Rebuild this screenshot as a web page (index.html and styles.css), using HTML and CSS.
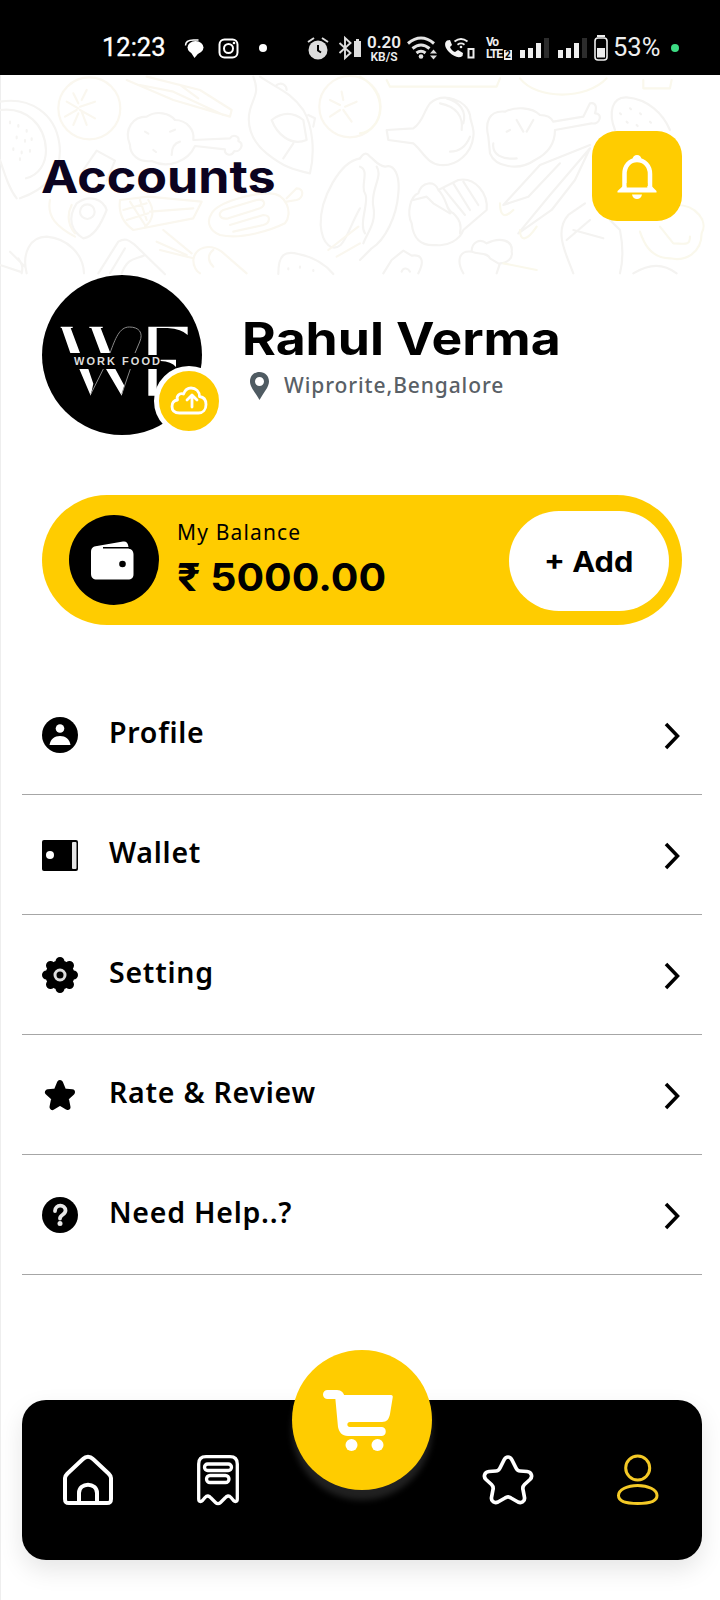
FILE: index.html
```html
<!DOCTYPE html>
<html lang="en">
<head>
<meta charset="utf-8">
<title>Accounts</title>
<link rel="stylesheet" href="styles.css">
</head>
<body>
<div class="screen">
  <div class="status">
    <span class="time"><span class="fit">12:23</span></span>
    <svg class="notifs" width="86" height="26" viewBox="183 35 86 26">
      <ellipse cx="195.500" cy="47.500" rx="8" ry="6.500" fill="#fff"/>
      <path d="M190 51l4.500 7 5-6z" fill="#fff"/>
      <path d="M185.500 45.500c0-4 4-5.500 8-5.500h5" fill="none" stroke="#fff" stroke-width="1.500"/>
      <rect x="219.500" y="39.500" width="18" height="18" rx="5" fill="none" stroke="#fff" stroke-width="2"/>
      <circle cx="228.500" cy="48.500" r="4.500" fill="none" stroke="#fff" stroke-width="2"/>
      <circle cx="234" cy="43" r="1.300" fill="#fff"/>
      <circle cx="263" cy="48" r="4" fill="#fff"/>
    </svg>
    <svg class="radios" width="56" height="26" viewBox="306 35 56 26">
      <circle cx="318" cy="50" r="9.500" fill="#ddd"/>
      <path d="M308 42l6-4M328 42l-6-4" stroke="#ddd" stroke-width="2"/>
      <path d="M318 45v5.500l3 2" fill="none" stroke="#000" stroke-width="2"/>
      <path d="M339.500 43l11 10-5.500 5V38l5.500 5-11 10" fill="none" stroke="#ddd" stroke-width="1.900"/>
      <path d="M354 41h7v16h-7zM356 39h3v2h-3z" fill="#ddd"/>
    </svg>
    <span class="rate"><b>0.20</b><i>KB/S</i></span>
    <svg class="wifi" width="68" height="26" viewBox="407 35 68 26">
      <g fill="none" stroke="#e4e4e4" stroke-width="3">
        <path d="M408 43.500q13-11 26 0M412.500 48.500q8.500-7 17 0M416.500 53q4.500-3.500 9 0"/>
      </g>
      <circle cx="421" cy="56.500" r="2.300" fill="#e4e4e4"/>
      <path d="M430 53.500l3.500-4 3.500 4zM430 55.500l3.500 4 3.500-4z" fill="#ddd"/>
      <path d="M447 40.500c-3 2-2.500 7 2 11.500 5 5 10 6.500 13.500 4l.5-3-5-3-3 2c-2.500-1-4-2.500-5-5l2-2-2-5z" fill="#f4f4f4"/>
      <g fill="none" stroke="#eee" stroke-width="1.800"><path d="M454.500 41.500q6.500-5 13 0M457.500 44.700q3.500-2.500 7 0"/></g>
      <circle cx="461" cy="47" r="1.300" fill="#eee"/>
      <path d="M468.500 49h5v8.500h-5z" fill="none" stroke="#eee" stroke-width="2"/>
    </svg>
    <span class="volte"><span>Vo</span><span>LTE<em>2</em></span></span>
    <svg class="signals" width="90" height="28" viewBox="519 34 90 28">
      <g fill="#eee"><path d="M520 50h5v8h-5zM528 48h5v10h-5zM536 43h5v15h-5zM558 50h5v8h-5zM566 48h5v10h-5zM574 43h5v15h-5z"/></g>
      <path d="M544 38h5v20h-5zM582 38h5v20h-5z" fill="#2c2c2c"/>
      <rect x="595" y="38" width="12" height="22" rx="3" fill="none" stroke="#eee" stroke-width="1.600"/>
      <path d="M597 35h8v2h-8zM597 48h8v9.500h-8z" fill="#eee"/>
    </svg>
    <span class="charge"><span class="fit">53%</span></span>
    <span class="live"></span>
  </div>

  <div class="hero">
    <svg class="doodles" viewBox="0 75 720 200" width="720" height="200" fill="none" stroke-width="6.500" stroke-linecap="round" stroke-linejoin="round">
      <g transform="translate(0 70) scale(.3333)">
        <g stroke="#f5f4f2">
          <path d="M0 95C90 80 165 130 178 220S130 360 60 385M0 120c80-10 135 45 138 120 0 40-20 75-60 85M0 270c20 60 30 90 50 115"/>
          <path d="M30 155v5M55 165v5M80 180v5M50 200v5M75 210v5M95 205v5M40 235v5M65 245v5M90 240v5M60 265v5"/>
          <path d="M390 225c-20-50 10-85 50-85 30-20 70-10 85 10 35 0 60 30 55 60l110-5c10-15 30-5 25 8 20 10 5 35-12 30-10 20-30 10-28-5l-90-10c-20 45-80 70-130 45-40 5-65-20-65-48z"/>
          <path d="M435 185l10 6M510 185l15-6M540 215c-20 5-25 20-25 40M460 240l8 6"/>
          <path d="M250 300l40-58 55 30-25 60M230 400c40-30 80-10 90 20-20 50-40 80-70 85-35-20-50-60-20-105z"/>
          <circle cx="262" cy="425" r="22"/>
          <path d="M80 610c-15-60 10-110 60-110 60 5 110 50 112 110M30 545l45 45M0 585l60 20M65 610c5-20 0-30-10-45"/>
          <path d="M295 610l60-95c25-15 35 0 50 10l90 88M330 610l45-75M365 610c20-50 40-40 70-55"/>
          <path d="M835 612c0-60 20-70 60-60 50 10 80 30 105 60M865 595v3M900 590v3M940 600v3"/>
          <path d="M1080 265c-60 10-120 120-118 200 5 60 35 80 60 60 20-20 30-60 58-110"/>
          <path d="M760 20c20 50 0 60-10 100s0 90 50 130 80 50 130 60c15-60 10-140-20-190-40-55-70-60-130-100M815 150c40-30 70-20 95 0l10 60c-50 20-90-20-105-60zM850 265l30-45M830 45c15-10 30 0 30 15M925 135l20 10-5 25"/>
        </g>
        <g stroke="#faf7ef">
          <circle cx="268" cy="115" r="93"/><circle cx="1050" cy="110" r="92"/>
          <path d="M235 115l-35-20M235 100l-15-30M245 90l15-30M240 110l45-15M240 120l45 25M235 130l-15 35M245 125l15 40M230 120l-35 20"/>
          <path d="M1020 105l-30-15M1030 90l-5-25M1035 110l35-15M1030 120l25 35M1020 120l-30 20"/>
          <path d="M380 30l140 60 170 50 5-20-95-60-160-40M420 45l100 20 150 70M540 45l55 40"/>
          <path d="M360 390l85-10 160 15-25 50-180 35c-30-20-45-50-40-90zM390 395l45 70M420 390l20 60M450 425l130-10M445 390c20 30 15 60-10 80M370 420l70-20M380 450l65-20"/>
          <path d="M635 430c20-35 120-60 175-60 50 0 70 60 45 90-40 20-130 50-195 35-25-10-45-35-25-65zM670 420l100-30c25-5 30 15 10 25l-95 30c-25 5-35-15-15-25zM690 465l100-30c25 0 20 25 0 30l-90 20M860 385l30-30c25 0 20 30 0 35l-30 5"/>
          <path d="M470 515l90 40M490 480l85 70M480 540l100 25M580 570c5-40 50-50 85-25l75 65M580 570c0 20 10 35 20 40M640 540c-20 15-15 35 0 50"/>
          <path d="M150 390c-10 50 20 80 75 110M215 405c-15 30-10 60 10 85M985 540l90-70M1010 560l70-40"/>
        </g>
      </g>
      <g transform="translate(360 70) scale(.3333)">
        <g stroke="#f4f3f1">
          <path d="M80 180l80-5c30-20 30-50 50-75 40-35 110-10 120 35 0 20 15 40 10 65-5 50-50 90-100 85-40-5-50-40-80-65l-75-10zM240 100c50 10 70 40 65 80M260 85c40 10 60 40 50 75M270 245c30 0 50-20 60-45"/>
          <path d="M385 200c-10-40 0-80 50-75 30-15 80-15 105 10 25 0 35 10 40 20l90-15 20-40c20-5 20 15 15 30 25 0 15 35-10 30l-110 20c0 40-20 70-60 90-50 35-120 20-135-20zM440 185l10-5M470 150l20 35M520 150l-20 35M400 220c-5 35 30 50 70 45"/>
          <path d="M765 180c-20-50-10-100 35-98 65 5 110 50 130 98M780 130l3 3M810 115l3 3M840 130l3 3M800 155l3 3M870 155l3 3M830 165l3 3"/>
          <path d="M155 460c-15-30-5-80 20-90 10-35 50-40 60-10l60-30c50-10 90 40 85 90l-70 60c-10 30-50 50-80 45-50 5-70-20-75-65zM235 360c30 30 20 60 45 70 20 20 25 35 20 60M250 355l65 80M280 340l50 80M310 335l45 70M160 390l40-10 20 20 50 30"/>
          <path d="M0 265c10-15 20-20 30-5 15 10 20 25 45 30 30-10 45 30 40 80-5 70-40 140-80 165l-35 35M0 290c30 10 0 60 15 80s-20 90 0 120M50 290c20 30-20 70-10 120s-20 80-30 110"/>
          <path d="M70 610l25-40 35-28 25 15c30-5 40 15 20 53M125 605c5-15 20-10 25 0M310 610c-20-35-15-70 25-65 0-30 25-40 45-25 40-20 80-10 75 25 5 20-15 35-35 35l-10 30M335 545c20 10 45 0 55 20l25 15"/>
          <path d="M690 225l-150 60-110 120 75-25 95-100M690 235l-120 140-95 115 100-70 70-90z"/>
          <path d="M820 610c50-30 90-30 130 0M750 450l30 30c10 50 10 90 0 130M640 610c-20-55-60-125-15-175l50-35M640 480l90 25M620 510l70-60"/>
        </g>
        <g stroke="#faf8ec">
          <path d="M0 20c90 50 70 160 0 170M80 30l10 20h320l10-25M480 25c50 65 200 65 260 0M850 30v25h80l5-25"/>
          <path d="M950 405c60 0 95 50 75 85 0 60-50 85-95 75-60 0-80-50-90-80M900 470l40 50c30 0 50 10 50-20"/>
          <path d="M420 400c0 40 15 45 40 20M480 480c0 35 20 35 50-10M430 580l100 20"/>
        </g>
      </g>
    </svg>
    <h1 class="title fit">Accounts</h1>
    <div class="bell">
      <svg width="40" height="48" viewBox="0 0 40 48" fill="none" stroke="#fff">
        <path d="M7.500 37V22c0-8 5-14 12.500-14s13 6 13 14v15" stroke-width="4.500"/>
        <path d="M.5 40.500V39l5.500-5h28.500l5 5v1.500z" fill="#fff" stroke="none"/>
        <path d="M9.700 31h20.600v4.500H9.700z" fill="#fc0" stroke="none"/>
        <path d="M15.500 7.500a4.500 4.500 0 0 1 9 0zM15 42.500h10c-1 6-9 6-10 0z" fill="#fff" stroke="none"/>
      </svg>
    </div>
  </div>

  <div class="person">
    <div class="avatar">
      <svg class="logo" width="160" height="160" viewBox="66 30 480 480">
        <circle cx="306" cy="270" r="240" fill="#000"/>
        <!-- monogram: slanted slabs joined by a hairline arch -->
        <g fill="#fff">
          <path d="M122 185h36v4h-6l28 75h-29l-26-75h-3zM208 185h40v4h-6l29 75h-29l-28-75h-6z"/>
          <path d="M178 312h27l15 44-8 36zM258 312h28l27 50-8 30z"/>
          <path d="M385 185h118v25q-18-18-60-21h-33v81h-25zM385 312h25v80h-25zM422 284h46v22q-14-16-46-18z"/>
        </g>
        <path d="M212 388l38-76M305 388l26-76M345 264l14-33c12-28-2-45-31-45-30 0-42 35-58 78" fill="none" stroke="#8a8a8a" stroke-width="3"/>
        <text x="162" y="300" font-family="'Liberation Sans', sans-serif" font-weight="700" font-size="33" fill="#ddd" textLength="258">WORK FOOD</text>
      </svg>
      <div class="upload">
        <svg width="38" height="30" viewBox="0 0 38 30" fill="none" stroke="#fff" stroke-width="2.800" stroke-linecap="round" stroke-linejoin="round">
          <path d="M9.500 27C4 27 2 24 2 20.500S4 14.500 7.500 14c-1.500-4 2-7.500 6-6C15 4 17.500 2 21 2c5 0 8.500 3.500 8.500 8.500 4 .5 6.500 3.500 6.500 8 0 5-3 8.500-7.500 8.500z"/>
          <path d="M22 21V10M17 14l5-5 5 5"/>
        </svg>
      </div>
    </div>
    <div class="who">
      <div class="name fit">Rahul Verma</div>
      <div class="place">
        <svg width="19" height="28" viewBox="0 0 19 28"><path fill-rule="evenodd" d="M9.500 0C4 0 0 4 0 9.500 0 15 5 20 9.500 28 14 20 19 15 19 9.500 19 4 15 0 9.500 0zm0 5a4.500 4.500 0 1 1 0 9 4.500 4.500 0 0 1 0-9z" fill="#4f5b62"/></svg>
        <span class="fit">Wiprorite,Bengalore</span>
      </div>
    </div>
  </div>

  <div class="balance">
    <div class="purse">
      <svg width="43" height="39" viewBox="0 0 43 39">
        <path d="M0 11c0-4 2-5.500 6-6L32 .5c3-.5 5 1 5.500 5.500H12v1.500h24c4 0 6.500 2 6.500 6V33c0 4-2 5.500-5.500 5.500H6c-4 0-6-2-6-6z" fill="#fff"/>
        <circle cx="31.500" cy="23" r="3.300"/>
      </svg>
    </div>
    <div class="sum">
      <div class="sum-label"><span class="fit">My Balance</span></div>
      <div class="sum-value"><span class="fit">₹ 5000.00</span></div>
    </div>
    <button class="add"><span class="fit">+ Add</span></button>
  </div>

  <div class="menu">
    <div class="row">
      <svg class="ico" viewBox="0 0 36 36"><circle cx="18" cy="18" r="18"/><circle cx="18" cy="11.500" r="4.300" fill="#fff"/><path d="M7.500 28c1-6 5-9 10.500-9s9.500 3 10.500 9z" fill="#fff"/></svg>
      <span class="label">Profile</span>
      <svg class="go" viewBox="0 0 16 28"><path d="M2 2l11.500 12L2 26"/></svg>
    </div>
    <div class="row">
      <svg class="ico" viewBox="0 0 36 36"><rect y="3" width="36" height="31" rx="2"/><rect x="30" y="5" width="4.500" height="27" rx="1" fill="#e6e6e6"/><circle cx="8" cy="18" r="4" fill="#fff"/></svg>
      <span class="label">Wallet</span>
      <svg class="go" viewBox="0 0 16 28"><path d="M2 2l11.500 12L2 26"/></svg>
    </div>
    <div class="row">
      <svg class="ico" viewBox="0 0 36 36"><circle cx="18" cy="18" r="14.500"/><path d="M18 4.500v27M4.500 18h27M8.500 8.500l19 19M27.500 8.500l-19 19" stroke="#000" stroke-width="9" stroke-linecap="round"/><circle cx="18" cy="18" r="5" fill="#000" stroke="#ddd" stroke-width="3"/></svg>
      <span class="label">Setting</span>
      <svg class="go" viewBox="0 0 16 28"><path d="M2 2l11.500 12L2 26"/></svg>
    </div>
    <div class="row">
      <svg class="ico" viewBox="0 0 36 36"><path d="M18 6l3.500 8.500 8.500.8-6.300 5.700 1.800 9-7.500-4.500-7.500 4.500 1.800-9L6 15.300l8.500-.8z" stroke="#000" stroke-width="6" stroke-linejoin="round"/></svg>
      <span class="label">Rate &amp; Review</span>
      <svg class="go" viewBox="0 0 16 28"><path d="M2 2l11.500 12L2 26"/></svg>
    </div>
    <div class="row">
      <svg class="ico" viewBox="0 0 36 36"><circle cx="18" cy="18" r="18"/><path d="M13 14c0-7 10.500-7 10.500-.5 0 4.500-5.500 4-5.500 8" fill="none" stroke="#e8e8e8" stroke-width="3.800" stroke-linecap="round"/><circle cx="18" cy="26.500" r="2.500" fill="#e8e8e8"/></svg>
      <span class="label">Need Help..?</span>
      <svg class="go" viewBox="0 0 16 28"><path d="M2 2l11.500 12L2 26"/></svg>
    </div>
  </div>

  <div class="nav">
    <svg width="50" height="50" viewBox="0 0 50 50" fill="none" stroke="#fff" stroke-width="4" stroke-linejoin="round">
      <path d="M2 23c0-2 1-3 2.500-4.500L20 4c3-3 7-3 10 0l15.500 14.500C47 20 48 21 48 23v21c0 3-1 4-4 4H6c-3 0-4-1-4-4z"/>
      <path d="M16 48V38c0-11 18-11 18 0v10"/>
    </svg>
    <svg class="receipt" width="42" height="50" viewBox="0 0 42 50" fill="none" stroke="#fff" stroke-width="3.300" stroke-linejoin="round">
      <path d="M1.700 44V9c0-5 2.300-7.300 7.300-7.300h24c5 0 7.300 2.300 7.300 7.300v35c0 3-2.300 3-3.800 1.500L34 42.500c-2-2.200-4-2-6 .500l-4.500 4.500c-1.500 1.500-3.500 1.500-5 0L14 43c-2-2.500-4-2.700-6-.500l-2.500 3C4 47 1.700 47 1.700 44z"/>
      <rect x="7.500" y="9" width="27" height="6.500" rx="3.200"/><rect x="9.500" y="20.500" width="22.500" height="7" rx="3.500"/>
    </svg>
    <div class="cart">
      <svg width="70" height="61" viewBox="0 0 70 61" fill="#fff">
        <path d="M4.500 4.500H14c2 0 3 1 3.500 4" fill="none" stroke="#fff" stroke-width="9" stroke-linecap="round"/>
        <path d="M12 5h56c1.500 0 2 1 1.700 2.500L67 24c-1 5-3 8-8 8H27c-3.500 0-3.500 5 0 5h32c5 0 5 9 0 9H25c-6 0-9-4-10-9z"/>
        <circle cx="28.500" cy="55" r="6"/><circle cx="54.500" cy="55" r="6"/>
      </svg>
    </div>
    <svg class="fav" width="50" height="50" viewBox="0 0 50 50" fill="none" stroke="#fff" stroke-width="3.700" stroke-linejoin="round">
      <path d="M21 5c2-4 6-4 8 0l4 8c1 2 2 3 4 3l7 .5c4.500.5 6 5 3 8l-5.500 5c-1.500 1.500-2 3-1.500 5l1.500 8c.5 4-3 6-6.500 4.500l-7-4c-2-1.500-4-1.500-6 0l-7 4C11.500 48.500 8 46.500 8.500 42.500L10 34.500c.5-2 0-3.500-1.500-5L3 24.500c-3-3-1.500-7.500 3-8l7-.5c2 0 3-1 4-3z"/>
    </svg>
    <svg class="me" width="42" height="50" viewBox="0 0 42 50" fill="none" stroke="#f4c926" stroke-width="3">
      <circle cx="20.700" cy="13" r="12"/><path d="M1.500 40.500c0-6 9-10 19.200-10s19.300 4 19.300 10-7 8-19.300 8-19.200-2-19.200-8z"/>
    </svg>
  </div>
</div>
</body>
</html>
```
FILE: styles.css
```css
* { box-sizing: border-box; }
body { margin: 0; background: #fff; color: #000; }
.screen { position: relative; z-index: 0; width: 720px; height: 1600px; padding-left: 1px; background: linear-gradient(90deg, #eee 1px, #fff 1px); overflow: hidden; font-family: "Noto Sans", sans-serif; }
svg { display: block; flex: none; overflow: visible; }
.fit { display: inline-block; white-space: nowrap; transform-origin: 0 50%; }

.status { display: flex; align-items: center; height: 75px; margin-left: -1px; padding: 21px 0 0 102px; background: #000; color: #fff; font-family: Roboto, sans-serif; line-height: 1; }
.time { width: 81px; font-size: 25.500px; font-weight: 400; -webkit-text-stroke: .3px #fff; }
.notifs { margin-right: 37px; }
.radios { margin-right: 5px; }
.rate { width: 40px; display: flex; flex-direction: column; align-items: center; padding-right: 6px; color: #eee; }
.rate b { font-size: 17px; line-height: 17px; font-weight: 600; }
.rate i { font-size: 12px; line-height: 12px; font-style: normal; font-weight: 600; }
.wifi { margin-right: 11px; }
.volte { width: 33px; display: flex; flex-direction: column; font-size: 12px; line-height: 12px; font-weight: 700; color: #eee; white-space: nowrap; letter-spacing: -1.2px; }
.volte em { display: inline-block; margin-left: 2px; width: 8px; height: 10px; background: #eee; color: #000; font-size: 10px; line-height: 10px; font-style: normal; text-align: center; letter-spacing: 0; }
.signals { margin-right: 4px; }
.charge { width: 58px; color: #eee; font-size: 25.500px; }
.live { width: 8px; height: 8px; border-radius: 50%; background: #3ddc84; }

.hero { position: relative; display: flex; justify-content: space-between; align-items: flex-start; height: 200px; padding: 56px 38px 0 41px; }
.doodles { position: absolute; left: -1px; top: 0; z-index: -1; }
.title { margin: 1px 0 0 -1px; font: 700 45px/90px Inter, sans-serif; color: #0b0320; transform: scaleX(1.115); }
.bell { display: flex; align-items: center; justify-content: center; width: 90px; height: 90px; border-radius: 25px; background: #fc0; }

.person { display: flex; align-items: center; height: 160px; padding-left: 41px; }
.avatar { position: relative; width: 160px; height: 160px; }
.upload { position: absolute; left: 112px; top: 91px; width: 70px; height: 70px; border: 5px solid #fff; border-radius: 50%; background: #fc0; display: flex; align-items: center; justify-content: center; }
.who { margin-left: 42px; }
.name { display: block; height: 56px; margin: 0 0 3px -2px; font: 700 45px/56px Inter, sans-serif; transform: scaleX(1.147); }
.place { display: flex; align-items: center; height: 30px; padding-left: 6px; gap: 15px; font-size: 21px; line-height: 30px; font-weight: 500; color: #596066; }
.place svg { margin-top: 2px; }
.place .fit { letter-spacing: .9px; }

.balance { display: flex; align-items: center; height: 130px; margin: 60px 38px 0 41px; padding-left: 27px; padding-right: 13px; border-radius: 65px; background: #fc0; }
.purse { display: flex; align-items: center; justify-content: center; width: 90px; height: 90px; padding-right: 4px; border-radius: 50%; background: #000; }
.sum { flex: 1; padding: 0 0 3px 18px; }
.sum-label { height: 28px; font-size: 21px; line-height: 28px; letter-spacing: 1.150px; margin-bottom: 7px; }
.sum-value { height: 46px; font: 700 38px/46px Inter, sans-serif; }
.sum-value .fit { transform: translateY(1px) scaleX(1.08); }
.add { width: 160px; height: 100px; margin-top: 2px; padding: 0 0 0 35px; border: 0; border-radius: 50px; background: #fff; color: #000; text-align: left; font: 700 28px/36px Inter, sans-serif; }
.add .fit { transform: translateY(1px) scaleX(1.1); }

.menu { margin: 50px 18px 0 21px; }
.row { display: flex; align-items: center; height: 120px; padding: 0 22px 0 20px; border-bottom: 1px solid #a6a6a6; }
.ico { width: 36px; height: 36px; margin-right: 31px; }
.label { flex: 1; padding-bottom: 5px; font-size: 28.500px; line-height: 40px; font-weight: 600; letter-spacing: .75px; white-space: nowrap; }
.go { width: 16px; height: 28px; margin-top: 3px; fill: none; stroke: #000; stroke-width: 3.500; }

.nav { position: relative; display: flex; align-items: center; height: 160px; margin: 125px 18px 0 21px; padding-left: 41px; border-radius: 24px; background: #000; box-shadow: 0 10px 24px rgba(0, 0, 0, .1); }
.receipt { margin-left: 84px; }
.fav { margin-left: 244px; }
.me { margin-left: 84px; }
.cart { position: absolute; left: 270px; top: -50px; width: 140px; height: 140px; padding-right: 8px; border-radius: 50%; background: #fc0; box-shadow: 0 10px 6px rgba(255, 255, 255, .13); display: flex; align-items: center; justify-content: center; }
```
